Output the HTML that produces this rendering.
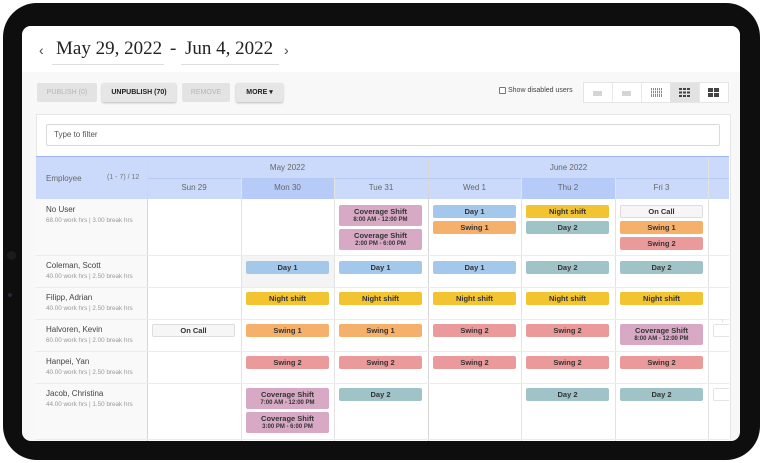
<!DOCTYPE html>
<html><head><meta charset="utf-8"><style>
*{margin:0;padding:0;box-sizing:border-box}
body{width:762px;height:463px;background:#fff;position:relative;overflow:hidden;font-family:"Liberation Sans",sans-serif;color:#333}
.bezel{position:absolute;left:3px;top:3px;width:757px;height:457px;background:#0e0e0e;border-radius:34px}
.screen{position:absolute;left:22px;top:26px;width:718px;height:415px;background:#f8f8f8;border-radius:9px;overflow:hidden}
.a{position:absolute}
.top{left:0;top:0;width:718px;height:46px;background:#fff}
.date{font-family:"Liberation Serif",serif;font-size:19px;color:#222;top:12px}
.btn{top:57px;height:19px;font-size:7px;font-weight:bold;text-align:center;line-height:19px;border-radius:2px;background:#e6e6e6;color:#222;box-shadow:0 1px 2px rgba(0,0,0,.25)}
.btn.dis{background:#e3e3e3;color:#b5b5b5;box-shadow:none;font-weight:normal}
.vb{top:56px;height:21px;background:#fff;border:1px solid #e5e5e5}
.panel{left:14px;top:88px;width:695px;height:330px;background:#fff;border:1px solid #e6e6e6}
.filter{left:24px;top:98px;width:674px;height:22px;border:1px solid #d9d9d9;border-radius:2px;background:#fff;font-size:8px;color:#555;line-height:20px;padding-left:7px}
.hd{background:#cbdafb;font-size:8px;color:#666;text-align:center}
.hd2{background:#b6cbf8}
.vl{width:1px;background:#e3e3e3}
.hl{height:1px;background:#ececec}
.name{font-size:8px;color:#444;left:24px}
.sub{font-size:6.3px;color:#999;left:24px}
.p{position:absolute;width:83px;height:13px;border-radius:2px;font-size:7.5px;font-weight:bold;color:#333;text-align:center;line-height:13px}
.cv{height:21px;line-height:9px;padding-top:2px;background:#d7a9c4}
.cv small{display:block;font-size:6px}
.d1{background:#a4c7ec}.s1{background:#f5b06c}.ns{background:#f3c432}.s2{background:#eb9a9b}.d2{background:#9fc3c7}
.oc{background:#f6f6f6;border:1px solid #ddd;line-height:11px}
</style></head><body>
<div class="bezel"></div>
<div class="a" style="left:7px;top:251px;width:9px;height:9px;border-radius:50%;background:#1c1c1c"></div>
<div class="a" style="left:8px;top:293px;width:4px;height:4px;border-radius:50%;background:#1f2a3a"></div>
<div class="screen">
<div class="a top"></div>
<div class="a" style="left:17px;top:16px;font-size:14px;color:#444">‹</div>
<div class="a date" style="left:34px">May 29, 2022</div>
<div class="a" style="left:30px;top:38px;width:112px;height:1px;background:#ddd"></div>
<div class="a date" style="left:148px">-</div>
<div class="a date" style="left:163px">Jun 4, 2022</div>
<div class="a" style="left:159px;top:38px;width:98px;height:1px;background:#ddd"></div>
<div class="a" style="left:262px;top:16px;font-size:14px;color:#444">›</div>

<div class="a btn dis" style="left:15px;width:60px">PUBLISH (0)</div>
<div class="a btn" style="left:80px;width:74px">UNPUBLISH (70)</div>
<div class="a btn dis" style="left:160px;width:48px">REMOVE</div>
<div class="a btn" style="left:214px;width:47px">MORE &#9662;</div>

<div class="a" style="left:477px;top:61px;width:7px;height:7px;border:1px solid #777;border-radius:1px;background:#fff"></div>
<div class="a" style="left:486px;top:61px;font-size:7px;color:#444">Show disabled users</div>
<div class="a vb" style="left:561px;width:146px"></div>
<div class="a" style="left:590px;top:57px;width:1px;height:19px;background:#e8e8e8"></div>
<div class="a" style="left:619px;top:57px;width:1px;height:19px;background:#e8e8e8"></div>
<div class="a" style="left:648px;top:57px;width:29px;height:19px;background:#e2e2e2"></div>
<div class="a" style="left:677px;top:57px;width:1px;height:19px;background:#e8e8e8"></div>
<div class="a" style="left:571px;top:65px;width:9px;height:5px;background:#d5d5d5"></div>
<div class="a" style="left:600px;top:65px;width:9px;height:5px;background:#d5d5d5"></div>
<svg class="a" style="left:629px;top:62px" width="11" height="9"><g fill="#888"><rect x="0" y="0" width="1" height="9"/><rect x="2" y="0" width="1" height="9"/><rect x="4" y="0" width="1" height="9"/><rect x="6" y="0" width="1" height="9"/><rect x="8" y="0" width="1" height="9"/><rect x="10" y="0" width="1" height="9"/></g><g fill="#fff" opacity=".6"><rect y="2" width="11" height="1"/><rect y="5" width="11" height="1"/></g></svg>
<svg class="a" style="left:657px;top:62px" width="11" height="9"><g fill="#444"><rect x="0" y="0" width="3" height="2"/><rect x="4" y="0" width="3" height="2"/><rect x="8" y="0" width="3" height="2"/><rect x="0" y="3.5" width="3" height="2"/><rect x="4" y="3.5" width="3" height="2"/><rect x="8" y="3.5" width="3" height="2"/><rect x="0" y="7" width="3" height="2"/><rect x="4" y="7" width="3" height="2"/><rect x="8" y="7" width="3" height="2"/></g></svg>
<svg class="a" style="left:686px;top:62px" width="11" height="9"><g fill="#444"><rect x="0" y="0" width="5" height="4"/><rect x="6" y="0" width="5" height="4"/><rect x="0" y="5" width="5" height="4"/><rect x="6" y="5" width="5" height="4"/></g></svg>

<div class="a panel"></div>
<div class="a filter">Type to filter</div>

<div class="a hd" style="left:14px;top:131px;width:693px;height:42px"></div>
<div class="a hd2" style="left:219px;top:152px;width:93px;height:21px"></div>
<div class="a hd2" style="left:499px;top:152px;width:94px;height:21px"></div>
<div class="a" style="left:14px;top:130px;width:693px;height:1px;background:#9db6ea"></div>
<div class="a" style="left:24px;top:148px;font-size:8px;color:#666">Employee</div>
<div class="a" style="left:85px;top:148px;font-size:7px;color:#777">(1 - 7) / 12</div>
<div class="a hd" style="left:125px;top:137px;width:281px;background:none">May 2022</div>
<div class="a hd" style="left:406px;top:137px;width:281px;background:none">June 2022</div>
<div class="a" style="left:125px;top:152px;width:582px;height:1px;background:#b6c9f0"></div>
<div class="a hd" style="left:125px;top:157px;width:94px;background:none">Sun 29</div>
<div class="a hd" style="left:219px;top:157px;width:93px;background:none">Mon 30</div>
<div class="a hd" style="left:312px;top:157px;width:94px;background:none">Tue 31</div>
<div class="a hd" style="left:406px;top:157px;width:93px;background:none">Wed 1</div>
<div class="a hd" style="left:499px;top:157px;width:94px;background:none">Thu 2</div>
<div class="a hd" style="left:593px;top:157px;width:93px;background:none">Fri 3</div>

<div class="a" style="left:14px;top:173px;width:111px;height:245px;background:#f9f9f9"></div>
<div class="a" style="left:219px;top:229px;width:93px;height:32px;background:#f4f4f4"></div>
<div class="a vl" style="left:125px;top:131px;height:290px;background:#d6d6d6"></div>
<div class="a vl" style="left:219px;top:152px;height:270px"></div>
<div class="a vl" style="left:312px;top:152px;height:270px"></div>
<div class="a vl" style="left:406px;top:131px;height:290px;background:#d6d6d6"></div>
<div class="a vl" style="left:499px;top:152px;height:270px"></div>
<div class="a vl" style="left:593px;top:152px;height:270px"></div>
<div class="a vl" style="left:686px;top:131px;height:290px"></div>
<div class="a hl" style="left:14px;top:229px;width:693px"></div>
<div class="a hl" style="left:14px;top:261px;width:693px"></div>
<div class="a hl" style="left:14px;top:293px;width:693px"></div>
<div class="a hl" style="left:14px;top:325px;width:693px"></div>
<div class="a hl" style="left:14px;top:357px;width:693px"></div>
<div class="a hl" style="left:14px;top:413px;width:693px"></div>

<div class="a name" style="top:179px">No User</div><div class="a sub" style="top:191px">68.00 work hrs | 3.00 break hrs</div>
<div class="a name" style="top:235px">Coleman, Scott</div><div class="a sub" style="top:247px">40.00 work hrs | 2.50 break hrs</div>
<div class="a name" style="top:267px">Filipp, Adrian</div><div class="a sub" style="top:279px">40.00 work hrs | 2.50 break hrs</div>
<div class="a name" style="top:299px">Halvoren, Kevin</div><div class="a sub" style="top:311px">60.00 work hrs | 2.00 break hrs</div>
<div class="a name" style="top:331px">Hanpei, Yan</div><div class="a sub" style="top:343px">40.00 work hrs | 2.50 break hrs</div>
<div class="a name" style="top:363px">Jacob, Christina</div><div class="a sub" style="top:375px">44.00 work hrs | 1.50 break hrs</div>

<div class="p cv" style="left:317px;top:179px">Coverage Shift<small>8:00 AM - 12:00 PM</small></div>
<div class="p cv" style="left:317px;top:203px">Coverage Shift<small>2:00 PM - 6:00 PM</small></div>
<div class="p d1" style="left:411px;top:179px">Day 1</div>
<div class="p s1" style="left:411px;top:195px">Swing 1</div>
<div class="p ns" style="left:504px;top:179px">Night shift</div>
<div class="p d2" style="left:504px;top:195px">Day 2</div>
<div class="p oc" style="left:598px;top:179px">On Call</div>
<div class="p s1" style="left:598px;top:195px">Swing 1</div>
<div class="p s2" style="left:598px;top:211px">Swing 2</div>
<div class="p d1" style="left:224px;top:235px">Day 1</div>
<div class="p d1" style="left:317px;top:235px">Day 1</div>
<div class="p d1" style="left:411px;top:235px">Day 1</div>
<div class="p d2" style="left:504px;top:235px">Day 2</div>
<div class="p d2" style="left:598px;top:235px">Day 2</div>
<div class="p ns" style="left:224px;top:266px">Night shift</div>
<div class="p ns" style="left:317px;top:266px">Night shift</div>
<div class="p ns" style="left:411px;top:266px">Night shift</div>
<div class="p ns" style="left:504px;top:266px">Night shift</div>
<div class="p ns" style="left:598px;top:266px">Night shift</div>
<div class="p oc" style="left:130px;top:298px">On Call</div>
<div class="p s1" style="left:224px;top:298px">Swing 1</div>
<div class="p s1" style="left:317px;top:298px">Swing 1</div>
<div class="p s2" style="left:411px;top:298px">Swing 2</div>
<div class="p s2" style="left:504px;top:298px">Swing 2</div>
<div class="p cv" style="left:598px;top:298px">Coverage Shift<small>8:00 AM - 12:00 PM</small></div>
<div class="a" style="left:691px;top:298px;width:16px;height:13px;border:1px solid #e3e3e3;border-right:none;border-radius:2px 0 0 2px"></div>
<div class="a" style="left:699px;top:290px;font-size:8px;color:#ccc">›</div>
<div class="p s2" style="left:224px;top:330px">Swing 2</div>
<div class="p s2" style="left:317px;top:330px">Swing 2</div>
<div class="p s2" style="left:411px;top:330px">Swing 2</div>
<div class="p s2" style="left:504px;top:330px">Swing 2</div>
<div class="p s2" style="left:598px;top:330px">Swing 2</div>
<div class="p cv" style="left:224px;top:362px">Coverage Shift<small>7:00 AM - 12:00 PM</small></div>
<div class="p cv" style="left:224px;top:386px">Coverage Shift<small>3:00 PM - 6:00 PM</small></div>
<div class="p d2" style="left:317px;top:362px">Day 2</div>
<div class="p d2" style="left:504px;top:362px">Day 2</div>
<div class="p d2" style="left:598px;top:362px">Day 2</div>
<div class="a" style="left:691px;top:362px;width:16px;height:13px;border:1px solid #e3e3e3;border-right:none;border-radius:2px 0 0 2px"></div>
</div>
</body></html>
